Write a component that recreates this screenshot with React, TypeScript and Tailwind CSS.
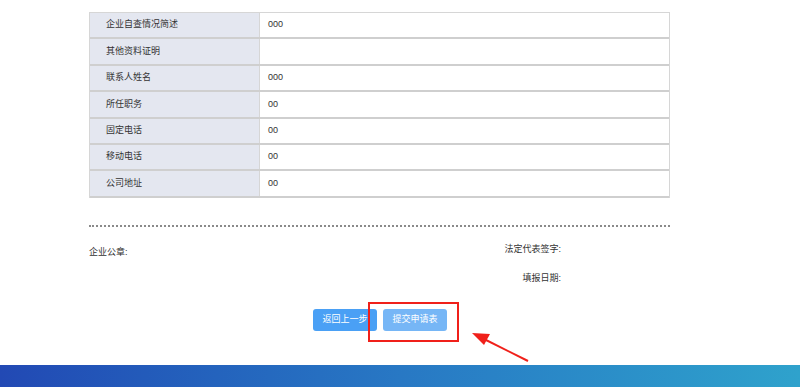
import React from 'react';

const rows = [
    { label: '企业自查情况简述', value: '000' },
    { label: '其他资料证明', value: '' },
    { label: '联系人姓名', value: '000' },
    { label: '所任职务', value: '00' },
    { label: '固定电话', value: '00' },
    { label: '移动电话', value: '00' },
    { label: '公司地址', value: '00' },
];

export default function App() {
    return (
        <div className="relative w-[800px] h-[387px] bg-white overflow-hidden text-[#333] text-[9px]" style={{ fontFamily: '"Liberation Sans", "Noto Sans CJK SC", sans-serif' }}>
            <div className="ml-[89px] w-[581px] pt-[12px]">
                {/* info table */}
                <div className="border border-[#d6d6d6] border-b-0">
                    {rows.map((row) => (
                        <div key={row.label} className="flex h-[26.4px] border-b-2 border-[#cfcfcf]">
                            <div className="w-[170px] shrink-0 bg-[#e4e7f0] border-r border-[#d6d6d6] flex items-center pl-[16px]">
                                {row.label}
                            </div>
                            <div className="flex-1 flex items-center pl-[8px]">{row.value}</div>
                        </div>
                    ))}
                </div>

                <div className="mt-[27px] border-t-2 border-dotted border-[#8a8a8a]" />

                {/* signature area */}
                <div className="flex mt-[16px]">
                    <div className="w-[330px] pt-[3px]">企业公章:</div>
                    <div className="w-[142px] flex flex-col items-end gap-[16px]">
                        <span>法定代表签字:</span>
                        <span>填报日期:</span>
                    </div>
                </div>

                <div className="flex gap-[6px] mt-[23px] ml-[224px]">
                    <button className="w-[64px] h-[22px] rounded-[3px] bg-[#4aa0f5] text-white">返回上一步</button>
                    <button className="w-[64px] h-[22px] rounded-[3px] bg-[#76b6f6] text-white">提交申请表</button>
                </div>
            </div>

            {/* highlight box + arrow */}
            <div className="absolute left-[368px] top-[302px] w-[91px] h-[40px] border-2 border-[#f0201a]" />
            <svg className="absolute left-0 top-0" width="800" height="387" viewBox="0 0 800 387">
                <line x1="528" y1="361" x2="482" y2="338" stroke="#f0201a" strokeWidth="2" />
                <polygon points="472,333 490,334 484,345" fill="#f0201a" />
            </svg>

            <div className="absolute left-0 bottom-0 w-full h-[22px] bg-gradient-to-r from-[#2249b4] via-[#2878c4] to-[#2fa2cc]" />
        </div>
    );
}
